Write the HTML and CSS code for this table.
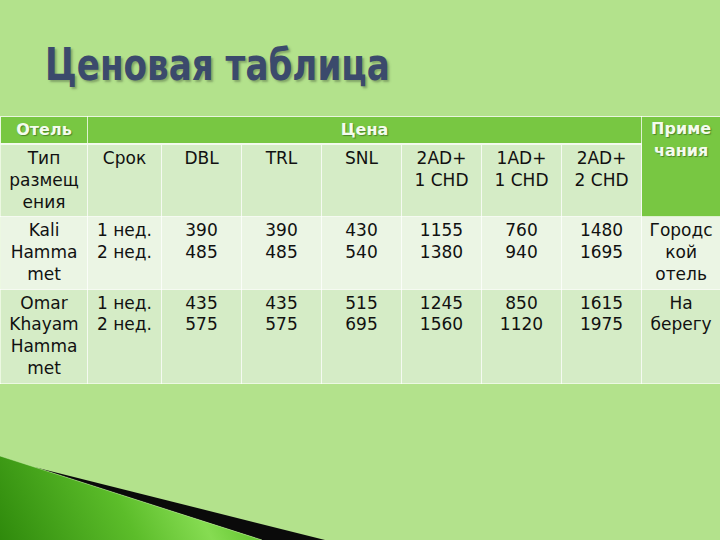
FILE: index.html
```html
<!DOCTYPE html>
<html lang="ru">
<head>
<meta charset="utf-8">
<title>Ценовая таблица</title>
<link rel="stylesheet" href="styles.css">
</head>
<body>
<div class="slide">
  <header class="title-area">
    <h1 class="title">Ценовая таблица</h1>
  </header>
  <table class="prices">
    <colgroup>
      <col class="c-hotel"><col class="c-term"><col class="c-p"><col class="c-p"><col class="c-p"><col class="c-p"><col class="c-p"><col class="c-p"><col class="c-note">
    </colgroup>
    <thead>
      <tr class="head">
        <th>Отель</th>
        <th colspan="7">Цена</th>
        <th rowspan="2" class="note-head">Приме<br>чания</th>
      </tr>
      <tr class="sub">
        <td>Тип<br>размещ<br>ения</td>
        <td>Срок</td>
        <td>DBL</td>
        <td>TRL</td>
        <td>SNL</td>
        <td>2AD+<br>1 CHD</td>
        <td>1AD+<br>1 CHD</td>
        <td>2AD+<br>2 CHD</td>
      </tr>
    </thead>
    <tbody>
      <tr class="odd">
        <td>Kali<br>Hamma<br>met</td>
        <td>1 нед.<br>2 нед.</td>
        <td>390<br>485</td>
        <td>390<br>485</td>
        <td>430<br>540</td>
        <td>1155<br>1380</td>
        <td>760<br>940</td>
        <td>1480<br>1695</td>
        <td>Городс<br>кой<br>отель</td>
      </tr>
      <tr class="even">
        <td>Omar<br>Khayam<br>Hamma<br>met</td>
        <td>1 нед.<br>2 нед.</td>
        <td>435<br>575</td>
        <td>435<br>575</td>
        <td>515<br>695</td>
        <td>1245<br>1560</td>
        <td>850<br>1120</td>
        <td>1615<br>1975</td>
        <td>На<br>берегу</td>
      </tr>
    </tbody>
  </table>
  <svg class="corner" width="340" height="90" viewBox="0 450 340 90" aria-hidden="true">
    <defs>
      <linearGradient id="g" x1="0" y1="540" x2="200" y2="440" gradientUnits="userSpaceOnUse">
        <stop offset="0" stop-color="#2f8a0c"/>
        <stop offset="0.55" stop-color="#5cbd2a"/>
        <stop offset="0.85" stop-color="#86dc52"/>
        <stop offset="1" stop-color="#6ccb38"/>
      </linearGradient>
    </defs>
    <polygon points="34,467 325,540 262,540" fill="#0a0a0a"/>
    <polygon points="0,456 262,540 0,540" fill="url(#g)"/>
    <line x1="0" y1="456" x2="262" y2="540" stroke="#c8f0a8" stroke-width="0.8" opacity="0.6"/>
  </svg>
</div>
</body>
</html>
```

FILE: styles.css
```css
html, body {
  margin: 0;
  padding: 0;
}
body {
  width: 720px;
  height: 540px;
  overflow: hidden;
  background: #b3e28c;
}
.slide {
  position: relative;
  width: 720px;
  height: 540px;
  overflow: hidden;
  background: #b3e28c;
}
.title-area {
  height: 116px;
  padding-left: 45px;
  box-sizing: border-box;
}
.title {
  margin: 0;
  padding-top: 48px;
  font-family: "DejaVu Sans Condensed", "DejaVu Sans", sans-serif;
  font-stretch: condensed;
  font-weight: bold;
  font-size: 38px;
  line-height: 38px;
  color: #3b4a6c;
  text-shadow: 2px 2px 2px rgba(70, 90, 60, 0.45);
  transform: scaleY(1.18);
  transform-origin: 0 80px;
  white-space: nowrap;
}
.prices {
  border-collapse: collapse;
  table-layout: fixed;
  width: 720px;
  font-family: "DejaVu Sans", sans-serif;
  font-size: 17px;
  line-height: 21.75px;
  color: #111;
}
.c-hotel { width: 87px; }
.c-term { width: 74px; }
.c-p { width: 80px; }
.c-note { width: 79px; }
.prices th,
.prices td {
  border: 1px solid rgba(255, 255, 255, 0.75);
  padding: 3px 0 3px 0;
  text-align: center;
  vertical-align: top;
  overflow: visible;
  white-space: nowrap;
}
.head th {
  background: #78c742;
  color: #f4fbee;
  font-weight: bold;
  font-size: 16px;
  line-height: 20px;
  height: 20px;
  text-shadow: 1px 1px 1px rgba(40, 80, 20, 0.55);
  border-top: 1px solid #e9f6de;
  border-bottom: 2px solid #f4faef;
}
.head th.note-head {
  line-height: 22px;
  padding-top: 1px;
  border-bottom: 1px solid rgba(255, 255, 255, 0.75);
}
.sub td {
  background: #d5ecc6;
}
.odd td {
  background: #ebf5e4;
}
.even td {
  background: #d5ecc6;
}
.corner {
  position: absolute;
  left: 0;
  bottom: 0;
  display: block;
}
```
